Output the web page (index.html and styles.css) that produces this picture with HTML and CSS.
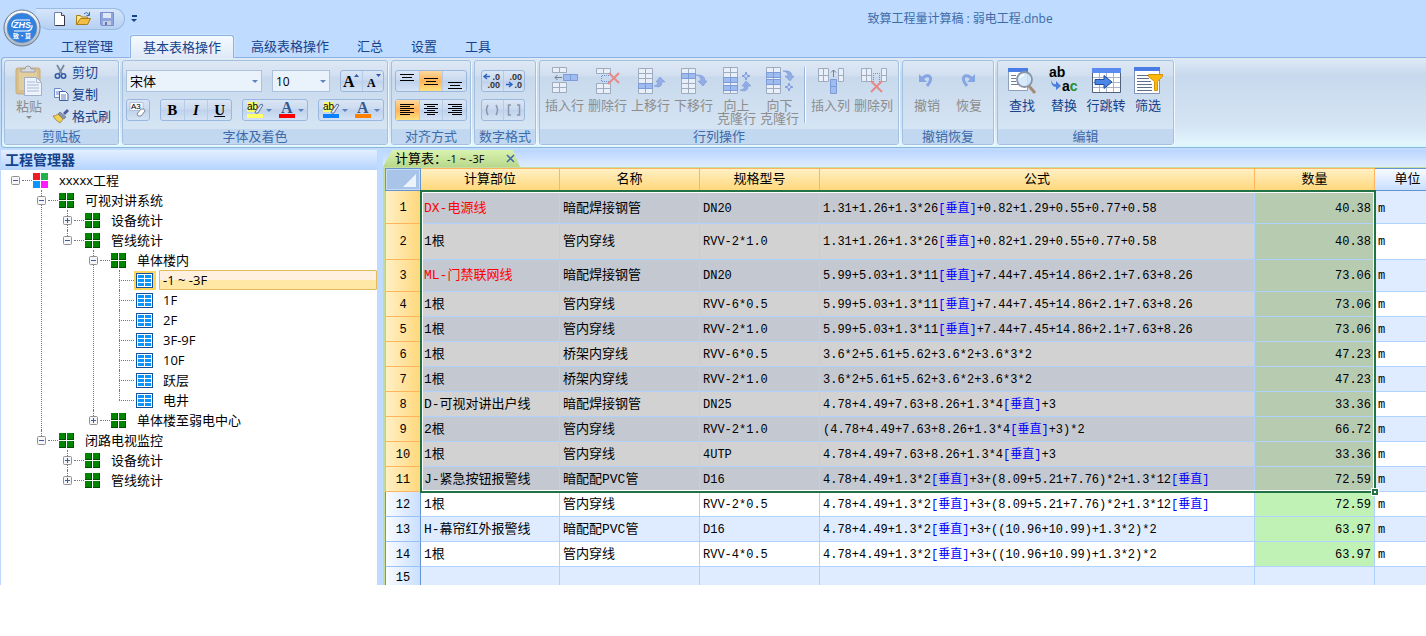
FILE: index.html
```html
<!DOCTYPE html>
<html lang="zh-CN">
<head>
<meta charset="utf-8">
<title>致算工程量计算稿 : 弱电工程.dnbe</title>
<link rel="stylesheet" href="styles.css">
</head>
<body>
<svg class="defs" aria-hidden="true">
  <symbol id="folder4" viewBox="0 0 15 15"><path fill="#004d00" d="M0 0h7v7H0zM8 0h7v7H8zM0 8h7v7H0zM8 8h7v7H8z"/><path fill="#008500" d="M0 0h6v6H0zM8 0h6v6H8zM0 8h6v6H0zM8 8h6v6H8z"/></symbol>
  <symbol id="sheet" viewBox="0 0 17 15"><path fill="#15509c" d="M0 0h17v15H0z"/><path fill="#fff" d="M1 1h15v13H1z"/><path fill="#0a95ff" d="M2 2h6v3H2zM9 2h6v3H9zM2 6h6v3H2zM9 6h6v3H9zM2 10h6v3H2zM9 10h6v3H9z"/></symbol>
  <symbol id="plus" viewBox="0 0 9 9"><rect x=".5" y=".5" width="8" height="8" rx="1" fill="#f6f6f6" stroke="#919191"/><path d="M2 4.5h5M4.5 2v5" stroke="#3c5aa8"/></symbol>
  <symbol id="minus" viewBox="0 0 9 9"><rect x=".5" y=".5" width="8" height="8" rx="1" fill="#f6f6f6" stroke="#919191"/><path d="M2 4.5h5" stroke="#3c5aa8"/></symbol>
</svg>
<div class="app">
  <header class="top">
    <button class="logo" aria-label="ZHS 致算">
      <svg width="38" height="38" viewBox="0 0 38 38"><defs><linearGradient id="ring" x2="0" y2="1"><stop stop-color="#fff"/><stop offset="1" stop-color="#aab6c6"/></linearGradient></defs><circle cx="19" cy="19" r="18" fill="url(#ring)" stroke="#66788f"/><circle cx="19" cy="19" r="15" fill="#3182e0" stroke="#8497ae" stroke-width=".6"/><path d="M9 18v-3q1-4 5-4h13M29 16v2q-1 4-5 4H11" fill="none" stroke="#fff" stroke-width="1.2"/><text x="19" y="19" class="logo-latin">ZHS</text><text x="19" y="29" class="logo-cjk">致•算</text></svg>
    </button>
    <div class="quick">
      <div class="quick-pill">
        <button aria-label="新建"><svg width="16" height="16" viewBox="0 0 16 16"><path d="M2.500 1.500h7l3 3v10h-10z" fill="#fff" stroke="#7383a0"/><path d="M9.500 1.500v3h3" fill="#dce5f2" stroke="#445"/><path d="M12.500 5v9.500h-9" fill="none" stroke="#334"/></svg></button>
        <button aria-label="打开"><svg width="17" height="16" viewBox="0 0 17 16"><path d="M1.500 13.500v-9h4l1 1.500h6v3" fill="#ffe48a" stroke="#a87e16"/><path d="M1.500 13.500l4-6h10l-3 6z" fill="#f4bd45" stroke="#a87e16"/><path d="M9 3q3-3 5 1M14.500 1v3.500h-3" fill="none" stroke="#3f6ca8"/></svg></button>
        <button aria-label="保存"><svg width="16" height="16" viewBox="0 0 16 16"><path d="M1.500 1.500h13v13h-12l-1-1z" fill="#8fa5dd" stroke="#7a8fcb"/><path d="M4 2h8v5H4z" fill="#dfe7f8"/><path d="M4 10h8v4H4z" fill="#c7cfe4"/><path d="M6 11h2v3H6z" fill="#5f74b0"/></svg></button>
      </div>
      <button class="quick-more" aria-label="自定义"><svg width="7" height="8" viewBox="0 0 7 8"><path d="M1 1h5" stroke="#15428b" stroke-width="2"/><path d="M0 4h6L3 7z" fill="#15428b"/></svg></button>
    </div>
    <h1 class="title">致算工程量计算稿 : 弱电工程.dnbe</h1>
    <nav class="tabs">
      <button>工程管理</button><button class="active">基本表格操作</button><button>高级表格操作</button><button>汇总</button><button>设置</button><button>工具</button>
    </nav>
  </header>

  <div class="ribbon">
    <section class="group clip">
      <div class="body row">
        <button class="big off">
          <svg width="28" height="32" viewBox="0 0 28 32"><rect x="1" y="3" width="24" height="26" rx="2" fill="#d9c08a" stroke="#c4ad7e"/><path d="M4 6h18v19H4z" fill="#e2cd9c"/><path d="M6 7V4h4q0-3 3-3t3 3h4v3z" fill="#d8dbe0" stroke="#9da3ad"/><path d="M9.500 12.500h12l5 5v13h-17z" fill="#edf2fb" stroke="#9fb0cb"/><path d="M21.500 12.500v5h5M12 17h8M12 20h12M12 23h12M12 26h12" fill="none" stroke="#aabbd6"/></svg>
          <span>粘贴</span><i class="caret"></i>
        </button>
        <div class="stack">
          <button><svg width="16" height="16" viewBox="0 0 16 16"><path d="M4 1l5 9M11 1L6 10" stroke="#7b8aa3" stroke-width="1.800"/><circle cx="4.500" cy="12" r="2.200" fill="none" stroke="#2e5ba8" stroke-width="1.600"/><circle cx="10.500" cy="12" r="2.200" fill="none" stroke="#2e5ba8" stroke-width="1.600"/></svg>剪切</button>
          <button><svg width="16" height="16" viewBox="0 0 16 16"><path d="M1.500 2.500h6l2 2v7h-8z" fill="#eef4ff" stroke="#6d8cc4"/><path d="M3 6h5M3 8h5" stroke="#6d8cc4"/><path d="M6.500 5.500h6l2.500 2.500v6.500h-8.500z" fill="#fff" stroke="#3a62ac"/><path d="M8 9h5M8 11h5M8 13h5" stroke="#5b80c4"/></svg>复制</button>
          <button><svg width="16" height="16" viewBox="0 0 16 16"><path d="M10 5l4-4 2 2-4 4z" fill="#4c5ea0"/><path d="M7 4l6 5-2 2-6-5z" fill="#8b97b3" stroke="#5b647c" stroke-width=".6"/><path d="M0 8q3 0 5-2l5 5-3 4q-5-3-7-7z" fill="#f2cf57" stroke="#8d7428" stroke-width=".7"/></svg>格式刷</button>
        </div>
      </div>
      <h2>剪贴板</h2>
    </section>

    <section class="group font">
      <div class="body lines">
        <div class="line">
          <label class="combo wide"><select aria-label="字体"><option>宋体</option></select></label>
          <label class="combo narrow"><select aria-label="字号"><option>10</option></select></label>
          <div class="seg"><button aria-label="增大字号"><svg width="18" height="20" viewBox="0 0 18 20"><text x="1" y="16" class="t-serif t16">A</text><path d="M12 6l2.500-3L17 6z" fill="#2f5ba5"/></svg></button><button aria-label="减小字号"><svg width="18" height="20" viewBox="0 0 18 20"><text x="3" y="16" class="t-serif t12">A</text><path d="M12 3h5l-2.500 3z" fill="#2f5ba5"/></svg></button></div>
        </div>
        <div class="line">
          <div class="seg one"><button aria-label="清除格式"><svg width="18" height="18" viewBox="0 0 18 18"><path d="M1 1.500h13v8H1z" fill="#f4f8ff" stroke="#9aa8c4" stroke-width=".6"/><text x="2" y="8" class="t-sans t8">A3</text><path d="M8 13l4-5q4-1 4 2l-4 5q-4 1-4-2z" fill="#fff" stroke="#7d8699"/></svg></button></div>
          <div class="seg three"><button class="b">B</button><button class="i">I</button><button class="u">U</button></div>
          <div class="seg drop"><button aria-label="突出显示"><svg width="18" height="18" viewBox="0 0 18 18"><path d="M1 1h10v10H1z" fill="#f9f871"/><text x="1" y="9" class="t-sans t10">ab</text><path d="M9 11l6-8 2 1-5 8q-3 1-3-1z" fill="#dfe8f6" stroke="#56709b"/><path d="M1 13h16v4H1z" fill="#ff6"/></svg></button><i class="caret"></i><button aria-label="字体颜色"><svg width="18" height="18" viewBox="0 0 18 18"><text x="3" y="12" class="t-serif t16 t-blue">A</text><path d="M1 13h16v4H1z" fill="#f00"/></svg></button><i class="caret"></i></div>
          <div class="seg drop"><button aria-label="底色"><svg width="18" height="18" viewBox="0 0 18 18"><path d="M1 1h10v10H1z" fill="#f9f871"/><text x="1" y="9" class="t-sans t10">ab</text><path d="M9 11l6-8 2 1-5 8q-3 1-3-1z" fill="#dfe8f6" stroke="#56709b"/><path d="M1 13h16v4H1z" fill="#0a80ff"/></svg></button><i class="caret"></i><button aria-label="前景色"><svg width="18" height="18" viewBox="0 0 18 18"><text x="3" y="12" class="t-serif t16 t-blue">A</text><path d="M1 13h16v4H1z" fill="#ff7f00"/></svg></button><i class="caret"></i></div>
        </div>
      </div>
      <h2>字体及着色</h2>
    </section>

    <section class="group align">
      <div class="body lines">
        <div class="line"><div class="seg three">
          <button aria-label="顶端对齐"><svg width="16" height="20" viewBox="0 0 16 20"><path d="M1 3.500h14M3 6.500h10M1 9.500h14" stroke="#000"/></svg></button><button class="on" aria-label="垂直居中"><svg width="16" height="20" viewBox="0 0 16 20"><path d="M1 7.500h14M3 10.500h10M1 13.500h14" stroke="#000"/></svg></button><button aria-label="底端对齐"><svg width="16" height="20" viewBox="0 0 16 20"><path d="M1 11.500h14M3 14.500h10M1 17.500h14" stroke="#000"/></svg></button></div></div>
        <div class="line"><div class="seg three">
          <button class="on" aria-label="左对齐"><svg width="16" height="14" viewBox="0 0 16 14"><path d="M1 1.500h14M1 3.500h10M1 5.500h14M1 7.500h10M1 9.500h14M1 11.500h10" stroke="#000"/></svg></button><button aria-label="居中"><svg width="16" height="14" viewBox="0 0 16 14"><path d="M1 1.500h14M4 3.500h8M1 5.500h14M4 7.500h8M1 9.500h14M4 11.500h8" stroke="#000"/></svg></button><button aria-label="右对齐"><svg width="16" height="14" viewBox="0 0 16 14"><path d="M1 1.500h14M5 3.500h10M1 5.500h14M5 7.500h10M1 9.500h14M5 11.500h10" stroke="#000"/></svg></button></div></div>
      </div>
      <h2>对齐方式</h2>
    </section>

    <section class="group number">
      <div class="body lines">
        <div class="line"><div class="seg"><button aria-label="增加小数位"><svg width="18" height="16" viewBox="0 0 18 16"><text x="17" y="7" class="t-sans t9 t-end">.0</text><text x="17" y="15" class="t-sans t9 t-end">.00</text><path d="M2 3.500h5M4 1L1 3.500 4 6" stroke="#2c62c2" fill="none" stroke-width="1.400"/></svg></button><button aria-label="减少小数位"><svg width="18" height="16" viewBox="0 0 18 16"><text x="17" y="7" class="t-sans t9 t-end">.00</text><text x="17" y="15" class="t-sans t9 t-end">.0</text><path d="M1 11.500h5M4 9l3 2.500L4 14" stroke="#2c62c2" fill="none" stroke-width="1.400"/></svg></button></div></div>
        <div class="line"><div class="seg"><button aria-label="圆括号"><svg width="16" height="14" viewBox="0 0 16 14"><path d="M4 2q-3 5 0 10M12 2q3 5 0 10" fill="none" stroke="#8a95a6" stroke-width="1.500"/></svg></button><button aria-label="方括号"><svg width="16" height="14" viewBox="0 0 16 14"><path d="M5 2H2.500v10H5M11 2h2.500v10H11" fill="none" stroke="#8a95a6" stroke-width="1.500"/></svg></button></div></div>
      </div>
      <h2>数字格式</h2>
    </section>

    <section class="group rows">
      <div class="body row">
        <button class="big off"><svg width="30" height="30" viewBox="0 0 30 30"><g fill="#e9eff8" stroke="#9fabbe"><path d="M2.500 2.500h14v5h-14zM9.500 2.500v5M2.500 17.500h14v10h-14zM9.500 17.500v10M2.500 22.500h14"/><path d="M13.500 9.500h14v6h-14zM20.500 9.500v6" fill="#9fbcf0" stroke="#7d9bd6"/></g><path d="M12 12.500H5M7.500 10L5 12.500 7.500 15" fill="none" stroke="#6f7f98"/></svg><span>插入行</span></button>
        <button class="big off"><svg width="30" height="30" viewBox="0 0 30 30"><g fill="#e9eff8" stroke="#9fabbe"><path d="M3.500 3.500h14v5h-14zM10.500 3.500v5M3.500 18.500h14v10h-14zM10.500 18.500v10M3.500 23.500h14"/></g><path d="M18 10.500H8.500v6H18" fill="none" stroke="#6c8fd0" stroke-dasharray="1 1"/><path d="M16 8l10 10M26 8L15 19" stroke="#e78a86" stroke-width="2"/></svg><span>删除行</span></button>
        <button class="big off"><svg width="30" height="30" viewBox="0 0 30 30"><path d="M2.500 3.500h14v25h-14zM9.500 3.500v25M2.500 8.500h14M2.500 13.500h14M2.500 23.500h14" fill="#e9eff8" stroke="#9fabbe"/><path d="M2.500 18.500h14v5h-14zM9.500 18.500v5" fill="#9fbcf0" stroke="#7d9bd6"/><path d="M18 21q4 0 4-4h-2l4-5 5 5h-3q0 7-8 4z" fill="#92ade6" stroke="#7590cf" stroke-width=".5"/></svg><span>上移行</span></button>
        <button class="big off"><svg width="30" height="30" viewBox="0 0 30 30"><path d="M2.500 3.500h14v25h-14zM9.500 3.500v25M2.500 13.500h14M2.500 18.500h14M2.500 23.500h14" fill="#e9eff8" stroke="#9fabbe"/><path d="M2.500 8.500h14v5h-14zM9.500 8.500v5" fill="#9fbcf0" stroke="#7d9bd6"/><path d="M17 10q9-1 9 6h2l-4 5-5-5h3q0-5-5-6z" fill="#92ade6" stroke="#7590cf" stroke-width=".5"/></svg><span>下移行</span></button>
        <button class="big off"><svg width="30" height="30" viewBox="0 0 30 30"><path d="M1.500 2.500h14v26h-14zM8.500 2.500v26M1.500 7.500h14" fill="#e9eff8" stroke="#9fabbe"/><path d="M1.500 12.500h14v5h-14zM8.500 12.500v5M1.500 20.500h14v5h-14zM8.500 20.500v5" fill="#9fbcf0" stroke="#7d9bd6"/><path d="M24 7l1 3 3 1-3 1-1 3-1-3-3-1 3-1z" fill="#c8d8f8" stroke="#7f9bdc"/><path d="M18 25q5 0 4-4h-2l4-5 5 5h-3q0 7-8 4z" fill="#92ade6" stroke="#7590cf" stroke-width=".5"/></svg><span>向上<br>克隆行</span></button>
        <button class="big off"><svg width="30" height="30" viewBox="0 0 30 30"><path d="M1.500 2.500h14v26h-14zM8.500 2.500v26M1.500 23.500h14" fill="#e9eff8" stroke="#9fabbe"/><path d="M1.500 7.500h14v5h-14zM8.500 7.500v5M1.500 14.500h14v5h-14zM8.500 14.500v5" fill="#9fbcf0" stroke="#7d9bd6"/><path d="M18 6q9-1 9 5h2l-4 5-5-5h3q0-4-5-5z" fill="#92ade6" stroke="#7590cf" stroke-width=".5"/><path d="M24 18l1 3 3 1-3 1-1 3-1-3-3-1 3-1z" fill="#c8d8f8" stroke="#7f9bdc"/></svg><span>向下<br>克隆行</span></button>
        <i class="sep"></i>
        <button class="big off"><svg width="30" height="30" viewBox="0 0 30 30"><path d="M2.500 3.500h10v13h-10zM7.500 3.500v13M2.500 10.500h10M22.500 3.500h5v13h-5zM22.500 10.500h5" fill="#e9eff8" stroke="#9fabbe"/><path d="M14.500 14.500h6v14h-6zM14.500 21.500h6" fill="#9fbcf0" stroke="#7d9bd6"/><path d="M17.500 12V5M15 7.500L17.500 5 20 7.500" fill="none" stroke="#6f7f98"/></svg><span>插入列</span></button>
        <button class="big off"><svg width="30" height="30" viewBox="0 0 30 30"><path d="M2.500 3.500h10v13h-10zM7.500 3.500v13M2.500 10.500h10M22.500 3.500h5v13h-5zM22.500 10.500h5" fill="#e9eff8" stroke="#9fabbe"/><path d="M14.500 17V8.500h6V17" fill="none" stroke="#6c8fd0" stroke-dasharray="1 1"/><path d="M12 16l11 11M23 16L12 27" stroke="#e78a86" stroke-width="2"/></svg><span>删除列</span></button>
      </div>
      <h2>行列操作</h2>
    </section>

    <section class="group undo">
      <div class="body row">
        <button class="big off"><svg width="30" height="30" viewBox="0 0 30 30"><path d="M10 14q3-4 7-3 4 3-2 10" fill="none" stroke="#86a5e3" stroke-width="3"/><path d="M7 9v8h8z" fill="#86a5e3"/></svg><span>撤销</span></button>
        <button class="big off"><svg width="30" height="30" viewBox="0 0 30 30"><path d="M18 14q-3-4-7-3-4 3 2 10" fill="none" stroke="#86a5e3" stroke-width="3"/><path d="M21 9v8h-8z" fill="#86a5e3"/></svg><span>恢复</span></button>
      </div>
      <h2>撤销恢复</h2>
    </section>

    <section class="group edit">
      <div class="body row">
        <button class="big"><svg width="30" height="30" viewBox="0 0 30 30"><path d="M1.500 3.500h19v22h-19z" fill="#fff" stroke="#8e9fbe"/><path d="M1 3h20v4H1z" fill="#4a7de4"/><path d="M4 10.500h5M4 13.500h5M4 16.500h5M4 19.500h7" stroke="#6c7f9e"/><path d="M22 21l6 7" stroke="#a58b70" stroke-width="3"/><circle cx="17.500" cy="14.500" r="7.500" fill="#cfe6fb" fill-opacity=".85" stroke="#8a94a6" stroke-width="1.800"/><path d="M13 13q1-3 4-3" fill="none" stroke="#fff" stroke-width="1.500"/></svg><span>查找</span></button>
        <button class="big"><svg width="30" height="30" viewBox="0 0 30 30"><text x="0" y="12" class="t-sans t14 t-bold">ab</text><text x="13" y="26" class="t-sans t14 t-bold">a<tspan fill="#21902b">c</tspan></text><path d="M2 14q1 6 5 5v-3l5 5-5 4v-3q-5 0-5-8z" fill="#4b7fdd"/></svg><span>替换</span></button>
        <button class="big"><svg width="30" height="30" viewBox="0 0 30 30"><path d="M1.500 3.500h28v24h-28z" fill="#fff" stroke="#52607a"/><path d="M8.500 7v20M15.500 7v20M22.500 7v20M2 12.500h27M2 17.500h27M2 22.500h27" stroke="#a9b3c4"/><path d="M1 3h29v5H1z" fill="#5b8af0"/><path d="M4 14.500h9v-4l8 6.500-8 6.500v-4H4z" fill="#4b86e6" stroke="#1d4c9c"/></svg><span>行跳转</span></button>
        <button class="big"><svg width="30" height="30" viewBox="0 0 30 30"><path d="M1.500 2.500h25v26h-25z" fill="#fff" stroke="#8292b0"/><path d="M1 2h26v4H1z" fill="#4a7de4"/><path d="M4 10.500h11M4 13.500h12M4 16.500h14M4 19.500h15M4 22.500h15M4 25.500h15" stroke="#5c6f8f"/><path d="M15.500 9.500h14v2l-5 5v9h-3v-9l-6-5z" fill="#ffb90a" stroke="#d49208"/></svg><span>筛选</span></button>
      </div>
      <h2>编辑</h2>
    </section>
  </div>

  <main class="work">
    <aside class="side">
      <h2 class="side-title">工程管理器</h2>
      <ul class="tree">
        <li><div class="node"><svg class="tg"><use href="#minus"/></svg><svg class="ic" viewBox="0 0 15 15"><path fill="#ee1c24" d="M0 0h7v7H0z"/><path fill="#22b14c" d="M8 0h7v7H8z"/><path fill="#0a95ff" d="M0 8h7v7H0z"/><path fill="#ff1aff" d="M8 8h7v7H8z"/></svg><span>xxxxx工程</span></div>
          <ul>
            <li><div class="node"><svg class="tg"><use href="#minus"/></svg><svg class="ic"><use href="#folder4"/></svg><span>可视对讲系统</span></div>
              <ul>
                <li><div class="node"><svg class="tg"><use href="#plus"/></svg><svg class="ic"><use href="#folder4"/></svg><span>设备统计</span></div></li>
                <li><div class="node"><svg class="tg"><use href="#minus"/></svg><svg class="ic"><use href="#folder4"/></svg><span>管线统计</span></div>
                  <ul>
                    <li><div class="node"><svg class="tg"><use href="#minus"/></svg><svg class="ic"><use href="#folder4"/></svg><span>单体楼内</span></div>
                      <ul>
                        <li><div class="leaf sel"><b><svg><use href="#sheet"/></svg></b><span>-1 ~ -3F</span></div></li>
                        <li><div class="leaf"><b><svg><use href="#sheet"/></svg></b><span>1F</span></div></li>
                        <li><div class="leaf"><b><svg><use href="#sheet"/></svg></b><span>2F</span></div></li>
                        <li><div class="leaf"><b><svg><use href="#sheet"/></svg></b><span>3F-9F</span></div></li>
                        <li><div class="leaf"><b><svg><use href="#sheet"/></svg></b><span>10F</span></div></li>
                        <li><div class="leaf"><b><svg><use href="#sheet"/></svg></b><span>跃层</span></div></li>
                        <li><div class="leaf"><b><svg><use href="#sheet"/></svg></b><span>电井</span></div></li>
                      </ul>
                    </li>
                    <li><div class="node"><svg class="tg"><use href="#plus"/></svg><svg class="ic"><use href="#folder4"/></svg><span>单体楼至弱电中心</span></div></li>
                  </ul>
                </li>
              </ul>
            </li>
            <li><div class="node"><svg class="tg"><use href="#minus"/></svg><svg class="ic"><use href="#folder4"/></svg><span>闭路电视监控</span></div>
              <ul>
                <li><div class="node"><svg class="tg"><use href="#plus"/></svg><svg class="ic"><use href="#folder4"/></svg><span>设备统计</span></div></li>
                <li><div class="node"><svg class="tg"><use href="#plus"/></svg><svg class="ic"><use href="#folder4"/></svg><span>管线统计</span></div></li>
              </ul>
            </li>
          </ul>
        </li>
      </ul>
    </aside>

    <section class="doc">
      <div class="doc-tabs">
        <div class="doc-tab"><span>计算表：<small>-1 ~ -3F</small></span><button aria-label="关闭"><svg width="9" height="9" viewBox="0 0 9 9"><path d="M1 1l7 7M8 1L1 8" stroke="#3b67ad" stroke-width="1.500"/></svg></button></div>
      </div>
      <div class="sheet">
        <table>
          <colgroup><col class="c-no"><col class="c-part"><col class="c-name"><col class="c-spec"><col><col class="c-qty"><col class="c-unit"></colgroup>
          <thead><tr><th class="corner"><svg width="13" height="13" viewBox="0 0 13 13"><path d="M13 0v13H0z" fill="#edf3fb"/></svg></th><th>计算部位</th><th>名称</th><th>规格型号</th><th>公式</th><th>数量</th><th class="plain">单位</th></tr></thead>
          <tbody>
            <tr class="in h33"><th>1</th><td class="red">DX-电源线</td><td>暗配焊接钢管</td><td>DN20</td><td>1.31+1.26+1.3*26<em>[垂直]</em>+0.82+1.29+0.55+0.77+0.58</td><td>40.38</td><td>m</td></tr>
            <tr class="in h36"><th>2</th><td>1根</td><td>管内穿线</td><td>RVV-2*1.0</td><td>1.31+1.26+1.3*26<em>[垂直]</em>+0.82+1.29+0.55+0.77+0.58</td><td>40.38</td><td>m</td></tr>
            <tr class="in h32"><th>3</th><td class="red">ML-门禁联网线</td><td>暗配焊接钢管</td><td>DN20</td><td>5.99+5.03+1.3*11<em>[垂直]</em>+7.44+7.45+14.86+2.1+7.63+8.26</td><td>73.06</td><td>m</td></tr>
            <tr class="in"><th>4</th><td>1根</td><td>管内穿线</td><td>RVV-6*0.5</td><td>5.99+5.03+1.3*11<em>[垂直]</em>+7.44+7.45+14.86+2.1+7.63+8.26</td><td>73.06</td><td>m</td></tr>
            <tr class="in"><th>5</th><td>1根</td><td>管内穿线</td><td>RVV-2*1.0</td><td>5.99+5.03+1.3*11<em>[垂直]</em>+7.44+7.45+14.86+2.1+7.63+8.26</td><td>73.06</td><td>m</td></tr>
            <tr class="in"><th>6</th><td>1根</td><td>桥架内穿线</td><td>RVV-6*0.5</td><td>3.6*2+5.61+5.62+3.6*2+3.6*3*2</td><td>47.23</td><td>m</td></tr>
            <tr class="in"><th>7</th><td>1根</td><td>桥架内穿线</td><td>RVV-2*1.0</td><td>3.6*2+5.61+5.62+3.6*2+3.6*3*2</td><td>47.23</td><td>m</td></tr>
            <tr class="in"><th>8</th><td>D-可视对讲出户线</td><td>暗配焊接钢管</td><td>DN25</td><td>4.78+4.49+7.63+8.26+1.3*4<em>[垂直]</em>+3</td><td>33.36</td><td>m</td></tr>
            <tr class="in"><th>9</th><td>2根</td><td>管内穿线</td><td>RVV-2*1.0</td><td>(4.78+4.49+7.63+8.26+1.3*4<em>[垂直]</em>+3)*2</td><td>66.72</td><td>m</td></tr>
            <tr class="in"><th>10</th><td>1根</td><td>管内穿线</td><td>4UTP</td><td>4.78+4.49+7.63+8.26+1.3*4<em>[垂直]</em>+3</td><td>33.36</td><td>m</td></tr>
            <tr class="in"><th>11</th><td>J-紧急按钮报警线</td><td>暗配配PVC管</td><td>D16</td><td>4.78+4.49+1.3*2<em>[垂直]</em>+3+(8.09+5.21+7.76)*2+1.3*12<em>[垂直]</em></td><td>72.59</td><td>m</td></tr>
            <tr><th>12</th><td>1根</td><td>管内穿线</td><td>RVV-2*0.5</td><td>4.78+4.49+1.3*2<em>[垂直]</em>+3+(8.09+5.21+7.76)*2+1.3*12<em>[垂直]</em></td><td>72.59</td><td>m</td></tr>
            <tr><th>13</th><td>H-幕帘红外报警线</td><td>暗配配PVC管</td><td>D16</td><td>4.78+4.49+1.3*2<em>[垂直]</em>+3+((10.96+10.99)+1.3*2)*2</td><td>63.97</td><td>m</td></tr>
            <tr><th>14</th><td>1根</td><td>管内穿线</td><td>RVV-4*0.5</td><td>4.78+4.49+1.3*2<em>[垂直]</em>+3+((10.96+10.99)+1.3*2)*2</td><td>63.97</td><td>m</td></tr>
            <tr class="blank"><th>15</th><td></td><td></td><td></td><td></td><td></td><td></td></tr>
          </tbody>
        </table>
        <div class="selection"><i></i></div>
      </div>
    </section>
  </main>
</div>
</body>
</html>
```

FILE: styles.css
```css
* { box-sizing: border-box; }
body { margin: 0; background: #fff; font: 13px/20px "Open Sans", "Noto Sans CJK SC", sans-serif; color: #000; }
button { border: 0; padding: 0; margin: 0; background: none; font: inherit; color: inherit; }
h1, h2, ul { margin: 0; padding: 0; font-size: 13px; font-weight: 400; }
ul { list-style: none; }
svg { display: block; flex: none; overflow: visible; }
i, em { font-style: normal; }
.defs { position: absolute; width: 0; height: 0; overflow: hidden; }
.app { background: #bfdbff; overflow: hidden; }

/* title bar and tabs */
.top { display: grid; grid-template-columns: 48px auto 1fr; grid-template-rows: 35px 22px; color: #15428b; }
.logo { grid-row: 1 / 3; align-self: start; padding: 9px 0 0 3px; position: relative; z-index: 2; }
.logo-latin { font: italic bold 9px "Liberation Sans", sans-serif; fill: #fff; text-anchor: middle; }
.logo-cjk { font: bold 6px "Noto Sans CJK SC", sans-serif; fill: #fff; text-anchor: middle; }
.quick { display: flex; align-items: center; gap: 6px; height: 22px; margin: 8px 0 0 -12px; }
.quick-pill { display: flex; align-items: center; gap: 7px; height: 22px; width: 89px; padding-left: 16px; border: 1px solid #9bbbe3; border-left: 0; border-radius: 0 11px 11px 14px; background: linear-gradient(#d6e6fb, #b5d0f2); }
.title { text-align: center; padding: 9px 10px 0 0; font-size: 12px; color: #3d6ba8; }
.tabs { grid-column: 2; display: flex; gap: 2px; }
.tabs button { padding: 0 13px; height: 22px; white-space: nowrap; }
.tabs .active { margin: 0 2px; border: 1px solid #8db2e3; border-bottom: 0; padding: 0 12px; border-radius: 3px 3px 0 0; background: linear-gradient(#f5faff, #dfe9f6); height: 23px; position: relative; z-index: 1; box-shadow: 0 0 2px #eaffff; }

/* ribbon */
.ribbon { display: flex; gap: 3px; margin-left: 1px; padding: 2px 2px 2px; border: 1px solid #8db2e3; border-right: 0; border-bottom-color: #8fb6d9; border-radius: 4px 0 0 4px; background: linear-gradient(#dfeaf6, #c7d9ee 20%, #d5e4f4 75%, #e4f8ff); box-shadow: inset 0 -2px #d9f7ff; }
.group { flex: none; display: flex; flex-direction: column; border: 1px solid #a3c0de; border-radius: 3px; background: linear-gradient(#dee8f5, #d2dff0 18%, #c8d9ed 19%, #d9e8f5); box-shadow: 1px 1px #f0f7ff; color: #15428b; }
.group h2 { height: 15px; line-height: 14px; text-align: center; background: #c1d8f0; color: #3e6aaa; border-radius: 0 0 2px 2px; white-space: nowrap; }
.clip { width: 115px; }
.font { width: 266px; }
.align { width: 80px; }
.number { width: 62px; }
.rows { width: 360px; }
.undo { width: 92px; }
.edit { width: 177px; }
.body { height: 68px; }
.row { display: flex; padding: 0 3px; }
.big { width: 42px; padding-top: 4px; display: flex; flex-direction: column; align-items: center; gap: 4px; line-height: 13px; white-space: nowrap; }
.rows .big { width: 43px; }
.off { color: #8d8d8d; }
.clip .big { gap: 3px; }
.sep { width: 2px; height: 56px; margin: 6px 3px; border-left: 1px solid #9bb5d6; background: #fff; }
.caret { border: 3px solid transparent; border-top-color: #5c83bd; border-bottom: 0; align-self: center; }
.off .caret { border-top-color: #8d8d8d; }
.stack { display: flex; flex-direction: column; padding: 0 0 0 3px; }
.stack button { display: flex; align-items: center; gap: 3px; height: 22px; white-space: nowrap; }
.lines { display: flex; flex-direction: column; gap: 7px; padding: 9px 3px 0; }
.number .lines { padding-left: 6px; }
.line { display: flex; gap: 10px; height: 22px; }
.seg { display: flex; width: 44px; border: 1px solid #9ab8dd; border-radius: 3px; background: linear-gradient(#dbe6f5, #cbdaf0 45%, #bfd2ec 50%, #d4e2f4); }
.seg button { flex: 1; display: flex; align-items: center; justify-content: center; line-height: 20px; color: #000; }
.seg button + button { border-left: 1px solid #b5cce8; }
.one { width: 24px; }
.three { width: 72px; }
.drop { width: 66px; }
.seg.drop button { border: 0; }
.drop .caret { margin-right: 3px; }
.seg .on { background: linear-gradient(#ffd9a0, #ffb458 50%, #ffe07e); }
.seg .b { font: bold 15px/20px "Liberation Serif", serif; }
.seg .i { font: italic bold 15px/20px "Liberation Serif", serif; }
.seg .u { font: bold 15px/20px "Liberation Serif", serif; text-decoration: underline; }
.combo { position: relative; display: block; }
.wide { width: 136px; }
.narrow { width: 58px; }
.combo select { appearance: none; display: block; width: 100%; height: 22px; margin: 0; padding: 0 3px; border: 1px solid #abc1de; border-radius: 0; background: #eaf2fb; font: 13px "Open Sans", "Noto Sans CJK SC", sans-serif; color: #000; }
.narrow select { font-size: 12px; }
.combo::after { content: ""; position: absolute; right: 4px; top: 10px; border: 3px solid transparent; border-top-color: #5c83bd; border-bottom: 0; }
.t-serif { font-family: "Liberation Serif", serif; font-weight: bold; }
.t-sans { font-family: "Liberation Sans", sans-serif; }
.t-bold { font-weight: bold; }
.t-blue { fill: #33598f; }
.t-end { text-anchor: end; font-weight: bold; fill: #333; }
.t8 { font-size: 8px; }
.t9 { font-size: 9px; }
.t10 { font-size: 10px; }
.t12 { font-size: 12px; }
.t14 { font-size: 14px; }
.t16 { font-size: 16px; }

/* project tree */
.work { display: flex; padding-top: 2px; }
.side { width: 378px; flex: none; border: 1px solid #bfd8ff; border-width: 0 1px; background: #fff; }
.side-title { height: 20px; line-height: 19px; padding-left: 4px; font-size: 14px; font-weight: 700; color: #15428b; background: linear-gradient(#e3efff, #b5d4ff); }
.tree { margin-left: -1px; }
.tree ul { padding-left: 26px; }
.tree li { position: relative; }
.tree ul > li::before { content: ""; position: absolute; left: 15px; top: 0; bottom: 0; border-left: 1px dotted #777; }
.tree ul > li:last-child::before { bottom: auto; height: 10px; }
.node { display: flex; align-items: center; height: 20px; padding-left: 11px; position: relative; white-space: nowrap; }
.node::before { content: ""; order: 1; width: 10px; margin: 0 1px 0 2px; border-top: 1px dotted #777; }
.tg { width: 9px; height: 9px; }
.ic { width: 15px; height: 15px; order: 2; }
.node span { order: 3; margin-left: 11px; }
.leaf { display: flex; align-items: center; height: 20px; padding-left: 15px; }
.leaf::before { content: ""; width: 15px; border-top: 1px dotted #777; }
.leaf b { padding: 2px; width: 22px; height: 19px; }
.leaf b svg { width: 17px; height: 15px; }
.leaf span { flex: 1; margin-left: 3px; border: 1px solid transparent; padding-left: 3px; height: 20px; line-height: 18px; font-size: 13px; }
.leaf.sel b { background: #ffd55e; }
.leaf.sel span { border-color: #e3bc5d; border-radius: 1px; background: linear-gradient(#fff0e0 50%, #ffe8a6 50%); }

/* worksheet */
.doc { flex: 1; min-width: 0; margin-left: 5px; }
.doc-tabs { height: 18px; background: linear-gradient(#bad6ff, #dfecff); border-bottom: 1px solid #c5dfa3; }
.doc-tab { display: flex; align-items: center; justify-content: space-between; width: 137px; height: 17px; padding: 0 5px 0 12px; line-height: 15px; background: linear-gradient(#d9f3ae, #b9d88c); clip-path: polygon(9px 0, 130px 0, 100% 100%, 0 100%); }
.doc-tab small { font-size: 11px; }
.sheet { position: relative; overflow: hidden; border-left: 2px solid #c3dd98; }
table { table-layout: fixed; width: calc(100% + 15px); border-collapse: separate; border-spacing: 0; background: #fff; font: 12px/14px "Liberation Mono", "Noto Sans CJK SC", monospace; }
.c-no { width: 36px; }
.c-part { width: 139px; }
.c-name { width: 140px; }
.c-spec { width: 120px; }
.c-qty { width: 120px; }
.c-unit { width: 66px; }
th, td { padding: 1px 3px 0; border: 0 solid #afd2ff; border-width: 0 1px 1px 0; white-space: nowrap; overflow: hidden; text-align: left; font-weight: 400; }
thead th { height: 23px; border-width: 1px 1px 1px 0; border-color: #ffb55e; background: linear-gradient(#fff0c4, #ffd87c); text-align: center; font-size: 13px; }
thead .plain { border-color: #6593cf; background: linear-gradient(#f8fbff, #c9dfff); }
thead .corner { border: 1px solid #6593cf; box-shadow: inset 0 0 0 1px #c9dcf5; background: #a9c4e9; padding: 0; }
.corner svg { margin: 2px 0 0 17px; }
tbody tr { height: 25px; }
tbody .h33 { height: 33px; }
tbody .h33 td { padding-top: 3px; }
tbody .h36 { height: 36px; }
tbody .h32 { height: 32px; }
tbody .blank { height: 18px; }
tbody .blank > * { border-bottom: 0; padding-top: 4px; }
tbody th { text-align: center; border-left: 1px solid #6593cf; border-right-color: #6593cf; border-bottom-color: #9ac2f5; background: linear-gradient(90deg, #fafcff, #c9dfff); }
tbody .in th { border-color: #ffb55e; background: linear-gradient(90deg, #fff0c4, #ffd87c); }
tbody tr:nth-child(odd) td { background: #dfecff; }
tbody td:nth-child(2), tbody td:nth-child(3) { font-size: 13px; }
tbody td:nth-child(6) { text-align: right; }
tbody .in td:nth-child(-n+5) { background: #d2d2d2; }
tbody .in:nth-child(odd) td:nth-child(-n+5) { background: #c4c8d1; }
tbody tr:not(.blank) td:nth-child(6) { background: #c0f2b5; }
tbody .in:nth-child(n) td:nth-child(6) { background: #b7cbb1; }
tbody .red { color: #f00; }
em { color: #00f; }
.selection { position: absolute; top: 22px; left: 35px; right: 50px; height: 303px; border: 2px solid #217346; box-shadow: inset 0 0 0 1px #fff; pointer-events: none; }
.selection i { position: absolute; right: -4px; bottom: -4px; width: 6px; height: 6px; border: 2px solid #217346; background: #fff; outline: 1px solid #fff; }
```
